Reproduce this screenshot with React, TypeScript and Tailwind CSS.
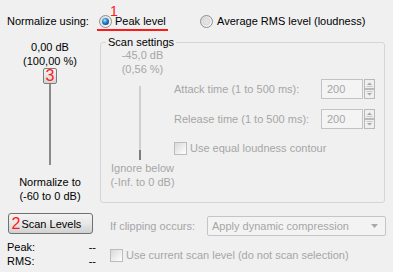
import React from "react";

const F = { fontFamily: '"Liberation Sans", Arial, sans-serif' };

function Radio({ checked }: { checked?: boolean }) {
  return (
    <svg width="13" height="13" viewBox="0 0 13 13">
      <defs>
        <linearGradient id={checked ? "rg1" : "rg2"} x1="0" y1="0" x2="1" y2="1">
          <stop offset="0" stopColor="#d6d6d6" />
          <stop offset="1" stopColor="#fbfbfb" />
        </linearGradient>
        <radialGradient id="dot" cx="0.4" cy="0.35" r="0.7">
          <stop offset="0" stopColor="#b8e6ff" />
          <stop offset="0.45" stopColor="#2f8fd6" />
          <stop offset="1" stopColor="#0b3f74" />
        </radialGradient>
      </defs>
      <circle cx="6.5" cy="6.5" r="6" fill={`url(#${checked ? "rg1" : "rg2"})`} stroke="#8f8f8f" />
      {checked ? (
        <circle cx="6.5" cy="6.5" r="3.5" fill="url(#dot)" />
      ) : (
        <circle cx="6.5" cy="6.5" r="3.5" fill="#e2e2e2" stroke="#d0d0d0" strokeWidth="0.6" />
      )}
    </svg>
  );
}

function Spinner() {
  return (
    <svg width="11" height="20" viewBox="0 0 11 20">
      <rect x="0.5" y="0.5" width="10" height="9" fill="#efefef" stroke="#b9b9b9" />
      <rect x="0.5" y="10.5" width="10" height="9" fill="#efefef" stroke="#b9b9b9" />
      <path d="M3 6 L5.5 3.5 L8 6 Z" fill="#a8a8a8" />
      <path d="M3 14 L5.5 16.5 L8 14 Z" fill="#a8a8a8" />
      <line x1="2.5" y1="7.5" x2="8.5" y2="7.5" stroke="#c8c8c8" />
      <line x1="2.5" y1="12.5" x2="8.5" y2="12.5" stroke="#c8c8c8" />
    </svg>
  );
}

function DisabledCheck() {
  return (
    <div className="w-[13px] h-[13px] border border-[#bcbcbc] bg-gradient-to-br from-[#d9d9d9] via-[#ececec] to-[#ffffff] shrink-0" />
  );
}

const dis = "text-[#a6a6a6]";

export default function App() {
  return (
    <div
      className="w-[393px] h-[272px] bg-[#f0f0f0] text-black text-[11px] leading-[14px] overflow-hidden whitespace-nowrap"
      style={F}
    >
      {/* top row */}
      <div className="flex items-center pt-[14px] h-[28px]">
        <div className="w-[99px] pl-[7px] shrink-0">Normalize using:</div>
        <div className="relative flex items-center w-[101px] shrink-0">
          <Radio checked />
          <span className="ml-[3px]">Peak level</span>
          <span className="absolute left-[11px] -top-[10px] text-[14px] leading-[14px] text-[#ff1a1a]">1</span>
          <div className="absolute -left-[2px] top-[15px] w-[71px] h-[2px] bg-[#ff1a1a]" />
        </div>
        <div className="flex items-center">
          <Radio />
          <span className="ml-[4px]">Average RMS level (loudness)</span>
        </div>
      </div>

      <div className="flex mt-[7px]">
        {/* left column */}
        <div className="w-[100px] shrink-0 flex flex-col items-center">
          <div className="mt-[5px]">0,00 dB</div>
          <div>(100,00 %)</div>
          <div className="w-[14px] h-[16px] border border-[#7c7c7c] rounded-[2px] bg-gradient-to-b from-[#f6f6f6] to-[#d4d4d4] flex items-center justify-center text-[16px] leading-[14px] text-[#ff1a1a]">
            3
          </div>
          <div className="w-[2px] h-[81px] bg-[#8a8a8a]" />
          <div className="mt-[10px]">Normalize to</div>
          <div>(-60 to 0 dB)</div>
          <div className="mt-[10px] w-[85px] h-[21px] border border-[#707070] rounded-[3px] bg-gradient-to-b from-[#f3f3f3] via-[#e8e8e8] to-[#d1d1d1] flex items-center pl-[3px]">
            <span className="text-[16px] leading-[16px] text-[#ff1a1a]">2</span>
            <span className="ml-[1px]">Scan Levels</span>
          </div>
          <div className="mt-[6px] w-full flex justify-between pl-[7px] pr-[4px]">
            <span>Peak:</span>
            <span>--</span>
          </div>
          <div className="w-full flex justify-between pl-[7px] pr-[4px]">
            <span>RMS:</span>
            <span>--</span>
          </div>
        </div>

        {/* right column */}
        <div className="w-[286px] shrink-0 flex flex-col">
          <div className="relative mt-[7px] w-[285px] h-[161px] border border-[#d5d5d5] rounded-[3px] flex">
            <span className="absolute -top-[8px] left-[5px] px-[2px] bg-[#f0f0f0]">Scan settings</span>
            <div className="w-[83px] shrink-0 flex flex-col items-center">
              <div className={`mt-[5px] ${dis}`}>-45,0 dB</div>
              <div className={dis}>(0,56 %)</div>
              <div className="self-start ml-[38px] mt-[10px] w-[2px] h-[74px] flex flex-col">
                <div className="flex-1 bg-[#cfcfcf]" />
                <div className="h-[10px] bg-[#7d7d7d]" />
              </div>
              <div className={`mt-[1px] ${dis}`}>Ignore below</div>
              <div className={dis}>(-Inf. to 0 dB)</div>
            </div>
            <div className="flex-1 flex flex-col -ml-[10px]">
              <div className="mt-[36px] flex items-center h-[20px]">
                <span className={`w-[147px] shrink-0 ${dis}`}>Attack time (1 to 500 ms):</span>
                <div className={`w-[42px] h-[20px] border border-[#c3c3c3] bg-[#f4f4f4] pl-[5px] flex items-center ${dis}`}>200</div>
                <div className="ml-[1px] flex"><Spinner /></div>
              </div>
              <div className="mt-[10px] flex items-center h-[20px]">
                <span className={`w-[147px] shrink-0 ${dis}`}>Release time (1 to 500 ms):</span>
                <div className={`w-[42px] h-[20px] border border-[#c3c3c3] bg-[#f4f4f4] pl-[5px] flex items-center ${dis}`}>200</div>
                <div className="ml-[1px] flex"><Spinner /></div>
              </div>
              <div className="mt-[12px] flex items-center h-[14px]">
                <DisabledCheck />
                <span className={`ml-[3px] ${dis}`}>Use equal loudness contour</span>
              </div>
            </div>
          </div>

          <div className="mt-[13px] flex items-center h-[20px] pl-[10px]">
            <span className={`w-[97px] shrink-0 ${dis}`}>If clipping occurs:</span>
            <div className={`w-[179px] h-[20px] border border-[#c5c5c5] rounded-[2px] bg-[#f3f3f3] flex items-center justify-between pl-[4px] pr-[7px] ${dis}`}>
              <span>Apply dynamic compression</span>
              <svg width="7" height="4" viewBox="0 0 7 4"><path d="M0 0 H7 L3.5 4 Z" fill="#a8a8a8" /></svg>
            </div>
          </div>
          <div className="mt-[12px] flex items-center h-[14px] pl-[10px]">
            <DisabledCheck />
            <span className={`ml-[3px] ${dis}`}>Use current scan level (do not scan selection)</span>
          </div>
        </div>
      </div>
    </div>
  );
}
